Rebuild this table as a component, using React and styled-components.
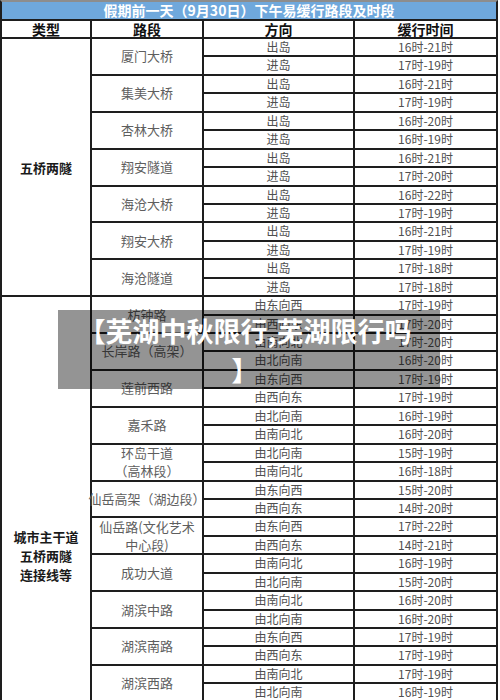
import React from "react";
import styled, { createGlobalStyle } from "styled-components";

const GlobalStyle = createGlobalStyle`
  html, body { margin: 0; padding: 0; background: #ffffff; }
  body { font-family: "Noto Sans CJK SC", "Noto Sans", sans-serif; }
`;

const Page = styled.div`
  position: relative;
  width: 500px;
`;

const Sheet = styled.div`
  display: grid;
  grid-template-columns: 88px 110px 149px 141px;
  grid-template-rows: 17px 16px repeat(36, 16.444px);
  column-gap: 2px;
  row-gap: 2px;
  width: max-content;
  background: #1e1e1e;
  border-top: 2px solid #8d8d8d;
  border-left: 2px solid #1e1e1e;
  border-right: 2px solid #1e1e1e;
`;

const TitleBar = styled.div`
  grid-column: 1 / -1;
  background: #6fa8dc;
  color: #ffffff;
  font-size: 14px;
  font-weight: 700;
  line-height: 17px;
  text-align: center;
  white-space: nowrap;
`;

const HeadCell = styled.div`
  background: #ffffff;
  color: #111111;
  font-size: 14px;
  font-weight: 700;
  line-height: 16px;
  text-align: center;
`;

const CategoryCell = styled.div`
  grid-column: 1;
  grid-row: span ${(p) => p.$span};
  background: #ffffff;
  color: #1a1a1a;
  font-size: 13px;
  font-weight: 700;
  line-height: 19px;
  text-align: center;
  display: flex;
  flex-direction: column;
  justify-content: ${(p) => (p.$top ? "flex-start" : "center")};
  padding-top: ${(p) => p.$top || 0}px;
  box-sizing: border-box;
`;

const RoadCell = styled.div`
  grid-column: 2;
  grid-row: span 2;
  background: #ffffff;
  color: #5e5e5e;
  font-size: 13px;
  line-height: 18px;
  text-align: center;
  display: flex;
  flex-direction: column;
  align-items: center;
  justify-content: center;
  white-space: nowrap;
`;

const DataCell = styled.div`
  grid-column: ${(p) => p.$col};
  background: #ffffff;
  color: #4f4f4f;
  font-size: 12px;
  line-height: 16px;
  text-align: center;
  white-space: nowrap;
`;

const Overlay = styled.div`
  position: absolute;
  left: 58px;
  top: 310px;
  width: 382px;
  height: 79px;
  box-sizing: border-box;
  padding: 1px 8px 0 0;
  background: rgba(0, 0, 0, 0.42);
  color: #ffffff;
  font-size: 27px;
  font-weight: 700;
  line-height: 39px;
  text-align: center;
  white-space: nowrap;
`;

const bridges = [
  ["厦门大桥", [["出岛", "16时-21时"], ["进岛", "17时-19时"]]],
  ["集美大桥", [["出岛", "16时-21时"], ["进岛", "17时-19时"]]],
  ["杏林大桥", [["出岛", "16时-20时"], ["进岛", "16时-19时"]]],
  ["翔安隧道", [["出岛", "16时-21时"], ["进岛", "17时-20时"]]],
  ["海沧大桥", [["出岛", "16时-22时"], ["进岛", "17时-19时"]]],
  ["翔安大桥", [["出岛", "16时-21时"], ["进岛", "17时-19时"]]],
  ["海沧隧道", [["出岛", "17时-18时"], ["进岛", "17时-18时"]]],
];

const roads = [
  [["枋钟路"], [["由东向西", "17时-19时"], ["由西向东", "17时-20时"]]],
  [["长岸路（高架）"], [["由南向北", "17时-20时"], ["由北向南", "16时-20时"]]],
  [["莲前西路"], [["由东向西", "17时-19时"], ["由西向东", "17时-19时"]]],
  [["嘉禾路"], [["由北向南", "16时-19时"], ["由南向北", "16时-20时"]]],
  [["环岛干道", "（高林段）"], [["由北向南", "15时-19时"], ["由南向北", "16时-18时"]]],
  [["仙岳高架（湖边段）"], [["由东向西", "15时-20时"], ["由西向东", "14时-20时"]]],
  [["仙岳路(文化艺术", "中心段)"], [["由东向西", "17时-22时"], ["由西向东", "14时-21时"]]],
  [["成功大道"], [["由南向北", "16时-19时"], ["由北向南", "15时-20时"]]],
  [["湖滨中路"], [["由南向北", "16时-20时"], ["由北向南", "16时-20时"]]],
  [["湖滨南路"], [["由东向西", "17时-19时"], ["由西向东", "17时-19时"]]],
  [["湖滨西路"], [["由南向北", "17时-19时"], ["由北向南", "16时-19时"]]],
];

function Group({ name, rows }) {
  const lines = Array.isArray(name) ? name : [name];
  return (
    <>
      <RoadCell>
        {lines.map((l) => (
          <span key={l}>{l}</span>
        ))}
      </RoadCell>
      {rows.map(([dir, time], i) => (
        <React.Fragment key={i}>
          <DataCell $col={3}>{dir}</DataCell>
          <DataCell $col={4}>{time}</DataCell>
        </React.Fragment>
      ))}
    </>
  );
}

export default function App() {
  return (
    <Page>
      <GlobalStyle />
      <Sheet>
        <TitleBar>假期前一天（9月30日）下午易缓行路段及时段</TitleBar>
        <HeadCell>类型</HeadCell>
        <HeadCell>路段</HeadCell>
        <HeadCell>方向</HeadCell>
        <HeadCell>缓行时间</HeadCell>
        <CategoryCell $span={14}>
          <span>五桥两隧</span>
        </CategoryCell>
        {bridges.map(([n, r]) => (
          <Group key={n} name={n} rows={r} />
        ))}
        <CategoryCell $span={22} $top={230}>
          <span>城市主干道</span>
          <span>五桥两隧</span>
          <span>连接线等</span>
        </CategoryCell>
        {roads.map(([n, r]) => (
          <Group key={n.join("")} name={n} rows={r} />
        ))}
      </Sheet>
      <Overlay>
        【芜湖中秋限行,芜湖限行吗
        <br />】
      </Overlay>
    </Page>
  );
}
